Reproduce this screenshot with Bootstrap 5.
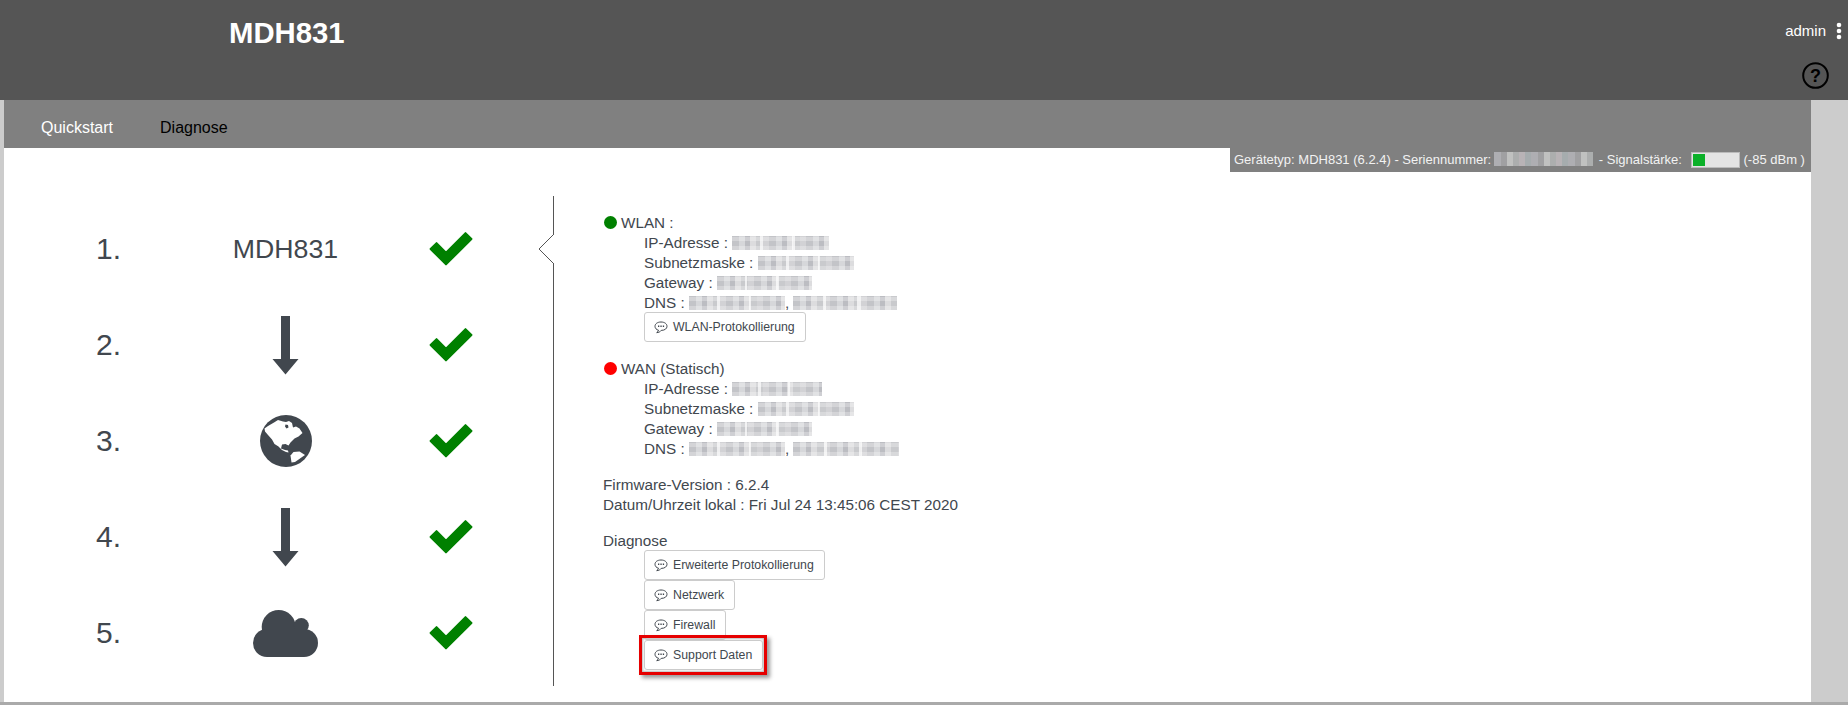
<!DOCTYPE html>
<html lang="de">
<head>
<meta charset="utf-8">
<title>MDH831</title>
<link href="https://cdn.jsdelivr.net/npm/bootstrap@5.3.0/dist/css/bootstrap.min.css" rel="stylesheet">
<style>
html,body{height:705px;overflow:hidden;}
body{font-family:"Liberation Sans",Arial,sans-serif;background:#ccc;color:#41474e;font-size:15.25px;line-height:20px;}
.top-head{height:100px;background:#555;color:#fff;}
.dev-title{font-size:29.300px;font-weight:700;line-height:33px;margin:16px 0 0 229px;}
.top-right{width:100px;padding:21px 6px 0 0;}
.admin-line{font-size:15px;line-height:20px;gap:10px;}
.help-ico{margin:21px 13px 0 0;display:block;}
.shell{height:605px;padding:0 37px 3px 4px;background:#ccc;box-shadow:inset 0 -3px 0 #aaa;}
.menu-bar{height:48px;background:#808080;padding:4px 0 0 37px;gap:47px;font-size:16px;line-height:47px;}
.menu-bar a{text-decoration:none;color:#fff;}
.menu-bar a.on{color:#000;}
.canvas{height:554px;background:#fff;}
.status-strip{height:24px;background:#808080;color:#f2f2f2;font-size:13px;line-height:24px;padding:0 0 0 4px;width:581px;white-space:nowrap;}
.sig-box{width:49px;height:16px;background:#e4e4e4;border:1px solid #bbb;display:inline-block;padding:1px;margin:0 4px 0 5px;vertical-align:-4px;}
.sig-fill{width:12px;height:100%;background:#0bb028;display:block;}
.mosaic{display:inline-block;vertical-align:-2px;height:14px;filter:blur(.6px);
 background-image:repeating-linear-gradient(0deg,rgba(255,255,255,.28) 0 4px,rgba(255,255,255,0) 4px 9px),
 linear-gradient(90deg,rgba(255,255,255,0) 0 29%,rgba(255,255,255,.7) 29% 32%,rgba(255,255,255,0) 32% 62%,rgba(255,255,255,.7) 62% 65%,rgba(255,255,255,0) 65%),
 repeating-linear-gradient(90deg,#c3c4c8 0 7px,#d6d7da 7px 13px,#bcbdc2 13px 18px,#dcdcde 18px 24px,#c9cacd 24px 31px,#d2d2d5 31px 37px);}
.strip-mosaic{height:14px;width:99px;margin:0 6px 0 -1px;
 background-image:repeating-linear-gradient(90deg,#aeaeb2 0 7px,#a0a0a2 7px 13px,#c0c1c0 13px 19px,#acaeae 19px 25px,#b8b3b6 25px 31px,#a6acae 31px 37px);}
.m90{width:90px}.m95{width:95px}.m96{width:96px}.m97{width:97px}.m104{width:104px}.m106{width:106px}
.step-grid{width:549px;display:grid;grid-template-columns:171px 221px 157px;grid-auto-rows:96px;padding-top:29px;}
.step-num{font-size:30px;line-height:96px;padding-left:92px;color:#41474e;}
.step-mid{display:flex;align-items:center;justify-content:center;font-size:26.700px;color:#41474e;}
.step-ok{display:flex;align-items:center;padding-left:33px;}
.divider-col{width:1px;height:490px;margin-top:24px;background:#555;position:relative;}
.notch{position:absolute;left:-15px;top:38px;width:16px;height:30px;}
.detail-col{padding:41px 0 0 49px;}
.indent-block{padding-left:41px;}
.btn-stack{margin-top:-1px;}
.dot-state{display:inline-block;width:13px;height:13px;border-radius:50%;margin:0 4px 0 1px;vertical-align:-1px;}
.dot-ok{background:#008000;}
.dot-bad{background:#f00;}
.tool-btn{display:flex;align-items:center;width:fit-content;height:30px;padding:0 10px 0 9px;background:#fff;border:1px solid #ccc;border-radius:3px;color:#41474e;font-size:12.300px;line-height:18px;gap:5px;}
.tool-btn:hover{background:#fff;color:#41474e;border-color:#ccc;}
.spaced{margin-top:17px;}
.spaced-b{margin-top:16px;}
.hl-wrap{position:relative;}
.hl-frame{position:absolute;left:-5px;top:-5px;width:128px;height:40px;border:3px solid #e60000;box-shadow:3px 3px 4px rgba(0,0,0,.4),inset 0 0 2px 1px #bbb;pointer-events:none;}
</style>
</head>
<body>
<svg width="0" height="0" class="d-block position-absolute">
  <symbol id="okmark" viewBox="0 0 44 34"><path d="M7.540 11.100 17 20.600 36.500 1.100 42.440 7 17 32.400 1.600 17z" fill="#008000" stroke="#008000" stroke-width="2" stroke-linejoin="round"/></symbol>
  <symbol id="bubble" viewBox="0 0 14 13"><path d="M7 1C3.200 1 1 3 1 5.300c0 2 1.500 3.500 3.500 3.900-.2 1-.8 1.800-1.800 2.400 2 0 3.500-.8 4.500-2.200 3.600 0 5.800-1.800 5.800-4.100S10.800 1 7 1z" fill="none" stroke="#41474e"/><path d="M4 5.300h1.300M6.400 5.300h1.300M8.800 5.300h1.300" stroke="#41474e" stroke-width="1.400"/></symbol>
  <symbol id="downarrow" viewBox="0 0 27 59"><path d="M9 0h9v43h8.500L13.500 58.500 .5 43H9z" fill="#41474e"/></symbol>
</svg>
<header class="top-head d-flex justify-content-between">
  <div class="dev-title">MDH831</div>
  <div class="top-right d-flex flex-column align-items-end">
    <div class="admin-line d-flex align-items-center">admin
      <svg width="6" height="18" viewBox="0 0 6 18" fill="#fff"><circle cx="3" cy="3" r="2.300"/><circle cx="3" cy="9" r="2.300"/><circle cx="3" cy="15" r="2.300"/></svg>
    </div>
    <svg class="help-ico" width="27" height="27" viewBox="0 0 27 27"><circle cx="13.500" cy="13.500" r="12.300" fill="none" stroke="#000" stroke-width="2"/><text x="13.500" y="20" text-anchor="middle" font-family="Liberation Sans" font-weight="700" font-size="18" fill="#000">?</text></svg>
  </div>
</header>
<div class="shell">
  <nav class="menu-bar d-flex">
    <a href="#">Quickstart</a>
    <a href="#" class="on">Diagnose</a>
  </nav>
  <main class="canvas">
    <div class="status-strip ms-auto">Gerätetyp: MDH831 (6.2.4) - Seriennummer: <span class="mosaic strip-mosaic"></span>- Signalstärke: <span class="sig-box"><span class="sig-fill"></span></span>(-85 dBm )</div>
    <div class="d-flex">
      <div class="step-grid">
        <div class="step-num">1.</div><div class="step-mid">MDH831</div>
        <div class="step-ok"><svg width="44" height="34"><use href="#okmark"/></svg></div>

        <div class="step-num">2.</div><div class="step-mid"><svg width="27" height="59"><use href="#downarrow"/></svg></div>
        <div class="step-ok"><svg width="44" height="34"><use href="#okmark"/></svg></div>

        <div class="step-num">3.</div><div class="step-mid"><svg width="52" height="52" viewBox="0 0 52 52"><circle cx="26" cy="26" r="26" fill="#41474e"/><path fill="#fff" d="M8 11 14 7.500 18 5l5 1.500 3 .5 3-1 3 2 1 4.500 3-1 3.500 2 3 4.500-4 3.500-4 2-4 4-2 3-3-1.500-3.500.5-1 4 4 1.500 3 .5.500 2-2.500-.5-4-2-3.500-3.500-4-2.500-2.500-4.500-4-4.500-3-3.500-.5-3z"/><path fill="#41474e" d="M25.500 9.500l2.500.5.500 2.500-2 1-1.500-2z"/><path fill="#fff" d="M30.500 40.500l3-3.500 6-.5 5.500 3.500-5 3.500-5 3.500-3.500.5z"/></svg></div>
        <div class="step-ok"><svg width="44" height="34"><use href="#okmark"/></svg></div>

        <div class="step-num">4.</div><div class="step-mid"><svg width="27" height="59"><use href="#downarrow"/></svg></div>
        <div class="step-ok"><svg width="44" height="34"><use href="#okmark"/></svg></div>

        <div class="step-num">5.</div><div class="step-mid"><svg width="65" height="47" viewBox="0 0 65 47" fill="#41474e"><circle cx="25.700" cy="17" r="17"/><circle cx="48.300" cy="15.500" r="7.500"/><circle cx="14" cy="33" r="14"/><circle cx="51" cy="33" r="14"/><rect x="14" y="19" width="37" height="28"/></svg></div>
        <div class="step-ok"><svg width="44" height="34"><use href="#okmark"/></svg></div>
      </div>
      <div class="divider-col">
        <svg class="notch" viewBox="0 0 16 30"><path d="M16 0 L1 15 L16 30" fill="#fff" stroke="#555" stroke-width="1"/></svg>
      </div>
      <div class="detail-col">
        <div><span class="dot-state dot-ok"></span>WLAN :</div>
        <div class="indent-block">
          <div>IP-Adresse : <span class="mosaic m97"></span></div>
          <div>Subnetzmaske : <span class="mosaic m96"></span></div>
          <div>Gateway : <span class="mosaic m95"></span></div>
          <div>DNS : <span class="mosaic m96"></span>, <span class="mosaic m104"></span></div>
          <div class="btn-stack">
            <button class="btn tool-btn" type="button"><svg width="14" height="13"><use href="#bubble"/></svg>WLAN-Protokollierung</button>
          </div>
        </div>
        <div class="spaced"><span class="dot-state dot-bad"></span>WAN (Statisch)</div>
        <div class="indent-block">
          <div>IP-Adresse : <span class="mosaic m90"></span></div>
          <div>Subnetzmaske : <span class="mosaic m96"></span></div>
          <div>Gateway : <span class="mosaic m95"></span></div>
          <div>DNS : <span class="mosaic m96"></span>, <span class="mosaic m106"></span></div>
        </div>
        <div class="spaced-b">Firmware-Version : 6.2.4</div>
        <div>Datum/Uhrzeit lokal : Fri Jul 24 13:45:06 CEST 2020</div>
        <div class="spaced-b">Diagnose</div>
        <div class="indent-block btn-stack">
          <button class="btn tool-btn" type="button"><svg width="14" height="13"><use href="#bubble"/></svg>Erweiterte Protokollierung</button>
          <button class="btn tool-btn" type="button"><svg width="14" height="13"><use href="#bubble"/></svg>Netzwerk</button>
          <button class="btn tool-btn" type="button"><svg width="14" height="13"><use href="#bubble"/></svg>Firewall</button>
          <div class="hl-wrap">
            <button class="btn tool-btn" type="button"><svg width="14" height="13"><use href="#bubble"/></svg>Support Daten</button>
            <div class="hl-frame"></div>
          </div>
        </div>
      </div>
    </div>
  </main>
</div>
<script src="https://cdn.jsdelivr.net/npm/bootstrap@5.3.0/dist/js/bootstrap.bundle.min.js"></script>
</body>
</html>
